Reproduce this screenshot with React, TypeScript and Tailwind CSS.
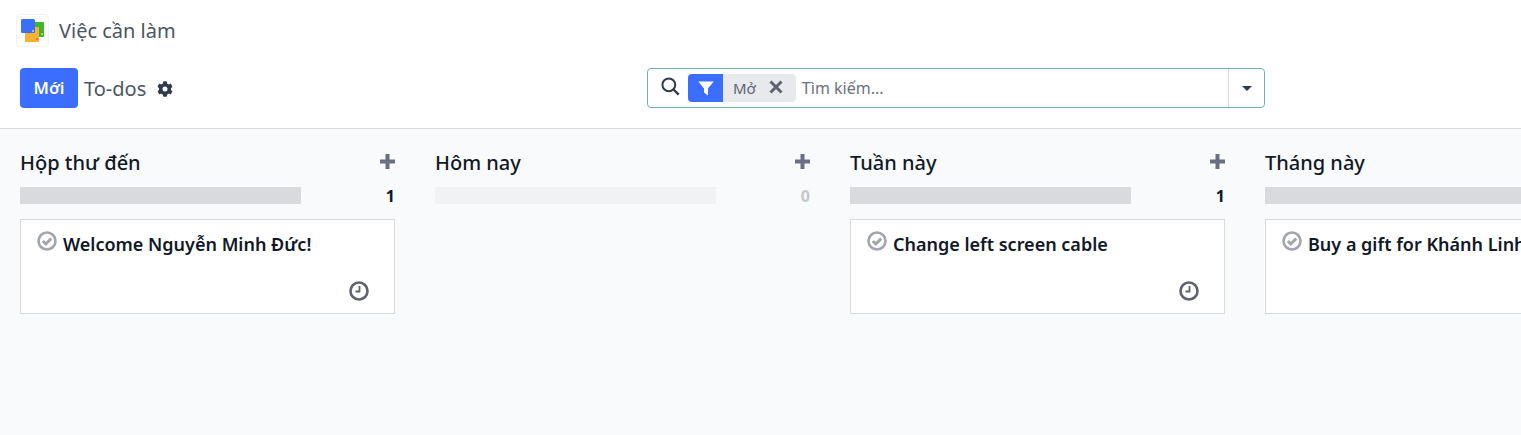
const font = { fontFamily: '"Noto Sans", sans-serif' };

const columns = [
  { title: "Hộp thư đến", count: 1, card: "Welcome Nguyễn Minh Đức!", clock: true },
  { title: "Hôm nay", count: 0 },
  { title: "Tuần này", count: 1, card: "Change left screen cable", clock: true },
  { title: "Tháng này", card: "Buy a gift for Khánh Linh" }
];

function AppLogo() {
  return (
    <div className="w-[33px] h-[33px] mt-[-1px] rounded-[4px] border border-[#f1f3f9] bg-white shrink-0">
      <svg width="31" height="31" viewBox="0 0 31 31">
        <rect x="13" y="7" width="14" height="15" rx="1" fill="#3fb52c" />
        <rect x="8" y="12" width="14" height="15" rx="1" fill="#fbb130" />
        <rect x="4" y="4" width="14" height="14" rx="1.5" fill="#3a6ffb" />
        <rect x="15" y="15" width="2" height="2" fill="#9db9fd" />
        <rect x="24" y="18" width="2" height="2" fill="#9bdc8e" />
        <rect x="19" y="23" width="2" height="2" fill="#f0703a" />
      </svg>
    </div>
  );
}

function Gear() {
  return (
    <svg width="16" height="16" viewBox="0 0 512 512" fill="#2f3b4c">
      <path d="M487 316l-42-25a191 191 0 000-70l42-25c5-3 7-9 5-14-11-35-30-67-54-93-4-4-10-5-15-2l-42 24a187 187 0 00-61-35V28c0-6-4-11-9-12-37-8-74-8-109 0-5 1-9 6-9 12v48a193 193 0 00-61 35L90 87c-5-3-11-2-15 2-24 26-43 58-54 93-2 5 0 11 5 14l42 25a191 191 0 000 70l-42 25c-5 3-7 9-5 14 11 35 30 67 54 93 4 4 10 5 15 2l42-24a187 187 0 0061 35v48c0 6 4 11 9 12 37 8 74 8 109 0 5-1 9-6 9-12v-48a193 193 0 0061-35l42 24c5 3 11 2 15-2 24-26 43-58 54-93 2-5 0-11-5-14zM256 336a80 80 0 110-160 80 80 0 010 160z" />
    </svg>
  );
}

function SearchIcon() {
  return (
    <svg width="19" height="19" viewBox="0 0 19 19" fill="none" className="ml-[13px] mt-[-4px]">
      <circle cx="7.800" cy="7.800" r="6.400" stroke="#2f3b4c" strokeWidth="2" />
      <path d="M12.500 12.500l5.200 5.200" stroke="#2f3b4c" strokeWidth="2.400" />
    </svg>
  );
}

function FilterIcon() {
  return (
    <svg width="16" height="16" viewBox="0 0 16 16" fill="#ffffff">
      <path d="M0.300 1.500h15.400L10 8.500V15.500l-4-3v-4z" />
    </svg>
  );
}

function CloseIcon() {
  return (
    <svg width="14" height="14" viewBox="0 0 14 14" fill="none" className="ml-[13px] mr-[13px] mt-[-3px]">
      <path d="M1.500 1.500l11 11M12.500 1.500l-11 11" stroke="#5f636f" strokeWidth="3" />
    </svg>
  );
}

function PlusIcon() {
  return (
    <svg width="15" height="15" viewBox="0 0 15 15" fill="#6b7080" className="mt-[-4px]">
      <path d="M5.500 0h4v5.500H15v4H9.500V15h-4V9.500H0v-4h5.500z" />
    </svg>
  );
}

function CheckCircle() {
  return (
    <svg width="20" height="20" viewBox="0 0 20 20" fill="none" className="shrink-0 mt-[-1px]">
      <circle cx="10" cy="10" r="8.500" stroke="#a3a5ad" strokeWidth="2.600" />
      <path d="M5.800 10l3 3 5.400-5.400" stroke="#a3a5ad" strokeWidth="3" />
    </svg>
  );
}

function Clock() {
  return (
    <svg width="20" height="20" viewBox="0 0 20 20" fill="none">
      <circle cx="10" cy="10" r="8.500" stroke="#5f636f" strokeWidth="2.600" />
      <path d="M10.500 5v5.500H6.500" stroke="#5f636f" strokeWidth="1.800" />
    </svg>
  );
}

function KanbanColumn({
  title,
  count,
  card,
  clock
}: {
  title: string;
  count?: number;
  card?: string;
  clock?: boolean;
}) {
  return (
    <div className="w-[375px] shrink-0">
      <div className="flex items-center justify-between h-[28px]">
        <span className="text-[20px] leading-[28px] font-medium text-[#111827]">{title}</span>
        {count !== undefined && <PlusIcon />}
      </div>
      <div className="flex items-center justify-between mt-[10px] h-[17px]">
        <div className={count === 0 ? "w-[281px] h-[17px] bg-[#f1f2f4]" : "w-[281px] h-[17px] bg-[#d8dadd]"} />
        {count !== undefined && (
          <span
            className={
              count
                ? "text-[16px] font-bold text-[#111827]"
                : "text-[16px] font-bold text-[#c4c6cb]"
            }
          >
            {count}
          </span>
        )}
      </div>
      {card && (
        <div className="mt-[15px] h-[95px] bg-white border border-[#d8dadd] pl-[16px] pr-[24px] pt-[12px] flex flex-col">
          <div className="flex gap-[6px] items-start">
            <CheckCircle />
            <span className="text-[18px] leading-[24px] font-semibold text-[#111827] whitespace-nowrap">
              {card}
            </span>
          </div>
          {clock && (
            <div className="flex justify-end mt-[25px] mr-[1px]">
              <Clock />
            </div>
          )}
        </div>
      )}
    </div>
  );
}

export default function App() {
  return (
    <div className="w-[1521px] h-[435px] overflow-hidden bg-[#f9fafb] flex flex-col" style={font}>
      <header className="h-[129px] shrink-0 bg-white border-b border-[#d8dadd] px-[20px] pt-[14px]">
        <div className="flex items-center gap-[10px] h-[33px] ml-[-4px]">
          <AppLogo />
          <span className="text-[20px] leading-[28px] text-[#4b5563]">Việc cần làm</span>
        </div>
        <div className="flex items-center mt-[21px] h-[40px]">
          <div className="w-[627px] flex items-center shrink-0">
            <button className="w-[58px] h-[40px] rounded-[4px] bg-[#3b6eff] text-white text-[16.500px] font-semibold">
              Mới
            </button>
            <span className="ml-[6px] text-[20px] leading-[28px] text-[#4b5563] mt-[1px]">To-dos</span>
            <span className="ml-[11px] mt-[1px]">
              <Gear />
            </span>
          </div>
          <div className="w-[618px] h-[40px] rounded-[4px] border border-[#6fb3b5] flex items-center shrink-0">
            <SearchIcon />
            <div className="ml-[8px] h-[28px] flex items-center rounded-[4px] bg-[#e7e9ed] overflow-hidden">
              <div className="w-[35px] h-[28px] bg-[#3b6eff] flex items-center justify-center">
                <FilterIcon />
              </div>
              <span className="ml-[10px] text-[15px] text-[#5f636f]">Mở</span>
              <CloseIcon />
            </div>
            <span className="ml-[6px] text-[16px] text-[#6b7280]">Tìm kiếm...</span>
            <div className="ml-auto w-[36px] h-full border-l border-[#d8dadd] flex items-center justify-center">
              <div className="w-0 h-0 border-x-[5px] border-x-transparent border-t-[5px] border-t-[#2f3b4c]" />
            </div>
          </div>
        </div>
      </header>
      <main className="flex gap-[40px] pl-[20px] pt-[20px]">
        {columns.map((c) => (
          <KanbanColumn key={c.title} title={c.title} count={c.count} card={c.card} clock={c.clock} />
        ))}
      </main>
    </div>
  );
}
